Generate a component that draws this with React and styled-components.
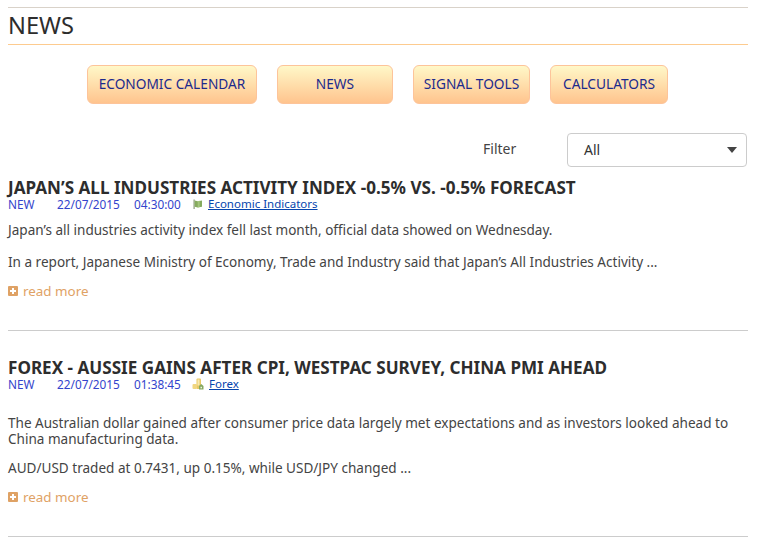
import React from "react";
import styled, { createGlobalStyle } from "styled-components";

const GlobalStyle = createGlobalStyle`
  html, body {
    margin: 0;
    padding: 0;
    background: #fff;
  }
  body {
    font-family: "Noto Sans", "Open Sans", sans-serif;
    color: #333;
  }
`;

const Page = styled.div`
  width: 740px;
  margin-left: 8px;
  padding-top: 7px;
`;

const Heading = styled.h1`
  box-sizing: content-box;
  margin: 0;
  height: 35px;
  padding-bottom: 1px;
  line-height: 35px;
  border-top: 1px solid #d9d2c9;
  border-bottom: 1px solid #fdcb8f;
  font-size: 23.6px;
  font-weight: 400;
  color: #2d2d2d;
`;

const Nav = styled.nav`
  display: flex;
  gap: 20px;
  margin: 20px 0 0 79px;
`;

const NavButton = styled.a`
  box-sizing: border-box;
  width: ${props => props.width}px;
  height: 39px;
  padding-bottom: 2px;
  display: flex;
  align-items: center;
  justify-content: center;
  border: 1px solid #fdc49a;
  border-radius: 6px;
  background: linear-gradient(#fff8c8, #ffc48e);
  color: #1c2a8c;
  font-size: 13.7px;
  white-space: nowrap;
`;

const FilterRow = styled.div`
  display: flex;
  align-items: center;
  margin-top: 29px;
  padding-left: 475px;
  height: 34px;
`;

const FilterLabel = styled.label`
  width: 84px;
  padding-bottom: 4px;
  font-size: 14px;
  color: #444;
`;

const Select = styled.div`
  box-sizing: border-box;
  width: 180px;
  height: 34px;
  padding: 0 9px 2px 16px;
  display: flex;
  align-items: center;
  justify-content: space-between;
  border: 1px solid #ccc;
  border-radius: 4px;
  font-size: 14px;
  color: #333;
`;

const Caret = styled.span`
  width: 0;
  height: 0;
  margin-top: 2px;
  border-left: 5px solid transparent;
  border-right: 5px solid transparent;
  border-top: 6px solid #444;
`;

const Article = styled.article`
  border-bottom: 1px solid #ccc;
  height: ${props => props.height}px;
  margin-top: ${props => props.top}px;
`;

const Title = styled.h2`
  margin: 0;
  font-size: 17.1px;
  line-height: 18px;
  font-weight: 700;
  color: #2d2d2d;
  white-space: nowrap;
`;

const Meta = styled.div`
  display: flex;
  align-items: center;
  height: 14px;
  font-size: 11.8px;
  line-height: 14px;
  color: #3344cc;
`;

const MetaNew = styled.span`
  width: 49px;
`;

const MetaDate = styled.span`
  width: 77px;
`;

const MetaTime = styled.span`
  width: 58px;
`;

const CategoryIcon = styled.svg`
  width: 12px;
  height: 12px;
  margin-right: ${props => props.gap}px;
`;

const CategoryLink = styled.a`
  color: #0645ad;
  font-size: 11.5px;
  text-decoration: underline;
`;

const Body = styled.p`
  margin: ${props => props.top}px 0 0;
  font-size: 13.55px;
  line-height: 16px;
  color: #444;
`;

const ReadMore = styled.a`
  display: flex;
  align-items: center;
  gap: 5px;
  margin-top: 12px;
  font-size: 13.4px;
  line-height: 18px;
  color: #dfa265;
`;

const PlusIcon = styled.svg`
  width: 10px;
  height: 10px;
`;

const FlagIcon = () => (
  <CategoryIcon viewBox="0 0 12 12" gap={4}>
    <path d="M1.5 1.5h1.2V11H1.5z" fill="#8a9a78" />
    <path d="M2.7 2.5l3 .7 4.3-.7v6.2l-4.3.7-3-.7z" fill="#86ab5e" />
    <path d="M5.7 3.2l2-.4v6.2l-2 .4z" fill="#a3c47c" />
  </CategoryIcon>
);

const CoinsIcon = () => (
  <CategoryIcon viewBox="0 0 12 12" gap={5}>
    <rect x="4.5" y="0.5" width="4.5" height="10.5" rx="1" fill="#e8c964" />
    <rect x="5.5" y="1.5" width="2" height="6" fill="#f7e9b0" />
    <rect x="0.5" y="6" width="4.5" height="5" rx="1" fill="#f0d680" />
    <path d="M7 8l2.2-2L11.5 8v3.5H7z" fill="#86a860" />
    <rect x="8.5" y="8.8" width="1.5" height="1.5" fill="#eef3e2" />
  </CategoryIcon>
);

const ReadMoreLink = () => (
  <ReadMore>
    <PlusIcon viewBox="0 0 10 10">
      <rect width="10" height="10" rx="1" fill="#dfa265" />
      <path d="M4 2h2v2h2v2H6v2H4V6H2V4h2z" fill="#fff" />
    </PlusIcon>
    read more
  </ReadMore>
);

export default function App() {
  return (
    <Page>
      <GlobalStyle />
      <Heading>NEWS</Heading>
      <Nav>
        <NavButton width={170}>ECONOMIC CALENDAR</NavButton>
        <NavButton width={116}>NEWS</NavButton>
        <NavButton width={117}>SIGNAL TOOLS</NavButton>
        <NavButton width={118}>CALCULATORS</NavButton>
      </Nav>
      <FilterRow>
        <FilterLabel>Filter</FilterLabel>
        <Select>
          All
          <Caret />
        </Select>
      </FilterRow>
      <Article top={12} height={151}>
        <Title>JAPAN’S ALL INDUSTRIES ACTIVITY INDEX -0.5% VS. -0.5% FORECAST</Title>
        <Meta>
          <MetaNew>NEW</MetaNew>
          <MetaDate>22/07/2015</MetaDate>
          <MetaTime>04:30:00</MetaTime>
          <FlagIcon />
          <CategoryLink>Economic Indicators</CategoryLink>
        </Meta>
        <Body top={11}>Japan’s all industries activity index fell last month, official data showed on Wednesday.</Body>
        <Body top={16}>In a report, Japanese Ministry of Economy, Trade and Industry said that Japan’s All Industries Activity ...</Body>
        <ReadMoreLink />
      </Article>
      <Article top={28} height={177}>
        <Title>FOREX - AUSSIE GAINS AFTER CPI, WESTPAC SURVEY, CHINA PMI AHEAD</Title>
        <Meta>
          <MetaNew>NEW</MetaNew>
          <MetaDate>22/07/2015</MetaDate>
          <MetaTime>01:38:45</MetaTime>
          <CoinsIcon />
          <CategoryLink>Forex</CategoryLink>
        </Meta>
        <Body top={24}>
          The Australian dollar gained after consumer price data largely met expectations and as investors looked ahead to China manufacturing data.
        </Body>
        <Body top={13}>AUD/USD traded at 0.7431, up 0.15%, while USD/JPY changed ...</Body>
        <ReadMoreLink />
      </Article>
    </Page>
  );
}
